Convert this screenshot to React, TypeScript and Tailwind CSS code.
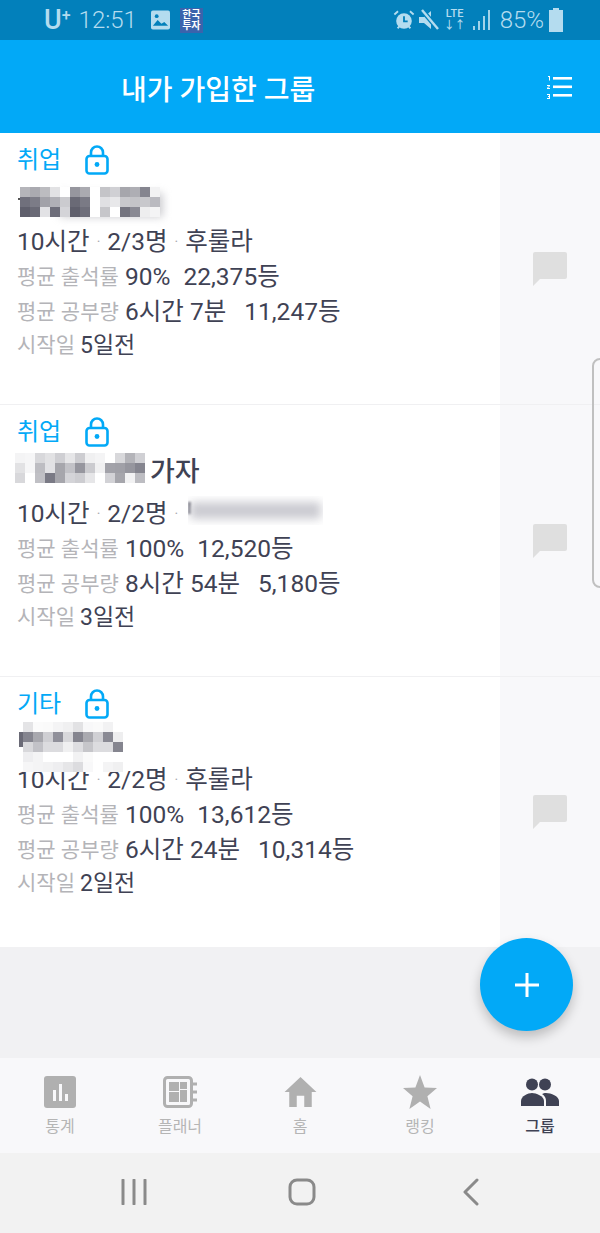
const font = '[font-family:Roboto,"Noto_Sans_CJK_KR",sans-serif]';

type Block = { left: number; top: number; rows: string[][] };

function Pixels({ left, top, rows }: Block) {
  return (
    <div className="absolute flex flex-col" style={{ left, top }}>
      {rows.map((row, i) => (
        <div key={i} className="flex h-[10px]">
          {row.map((c, j) => (
            <div key={j} className="w-[10px] h-[10px]" style={{ backgroundColor: c }} />
          ))}
        </div>
      ))}
    </div>
  );
}

function Lock() {
  return (
    <svg width="24" height="30" viewBox="0 0 24 30" fill="none" className="text-[#02a9f7]">
      <rect x="1.5" y="11" width="21" height="17.5" rx="3" stroke="currentColor" strokeWidth="2.6" />
      <path d="M6 11V7.5a6 6 0 0 1 12 0V11" stroke="currentColor" strokeWidth="2.6" />
      <circle cx="12" cy="19.5" r="2.4" fill="currentColor" />
    </svg>
  );
}

function Dot() {
  return <span className="mx-[7px] text-[#a9a9b0] text-[14px]">·</span>;
}

type Group = {
  cat: string;
  title?: string;
  count: string;
  owner?: string;
  attend: string;
  attendRank: string;
  study: string;
  studyRank: string;
  start: string;
};

function Card({ g, short, children }: { g: Group; short?: boolean; children?: React.ReactNode }) {
  return (
    <div className={short ? 'relative flex h-[270px] bg-white' : 'relative flex h-[271px] bg-white'}>
      <div className="flex-1 pl-[17px] pt-[9px] text-[#3f4254]">
        <div className="flex items-center h-[36px] text-[#02a9f7] text-[24px]">
          <span className="w-[68px]">{g.cat}</span>
          <Lock />
        </div>
        <div className={short ? 'h-[39px] flex items-center text-[27px] font-medium' : 'h-[45px] flex items-center text-[27px] font-medium'}>
          {g.title && <span className="ml-[133px]">{g.title}</span>}
        </div>
        <div className="h-[37px] pt-[2px] flex items-center text-[24.5px]">
          <span>10시간</span>
          <Dot />
          <span>{g.count}</span>
          <Dot />
          {g.owner && <span>{g.owner}</span>}
        </div>
        <div className="h-[35px] flex items-center text-[24.5px]">
          <span className="text-[#b4b4b8] text-[21px] w-[108px]">평균 출석률</span>
          <span>{g.attend}</span>
          <span className="ml-[13px]">{g.attendRank}</span>
        </div>
        <div className="h-[35px] flex items-center text-[24.5px]">
          <span className="text-[#b4b4b8] text-[21px] w-[108px]">평균 공부량</span>
          <span>{g.study}</span>
          <span className="ml-[18px]">{g.studyRank}</span>
        </div>
        <div className="h-[32px] flex items-center text-[23px]">
          <span className="text-[#b4b4b8] text-[21px] w-[63px]">시작일</span>
          <span>{g.start}</span>
        </div>
      </div>
      <div className="w-[100px] bg-[#f8f8fa] flex items-center justify-center">
        <svg width="34" height="34" viewBox="0 0 34 34" className="text-[#dfdfdf]">
          <path d="M2 0h30a2 2 0 0 1 2 2v23a2 2 0 0 1-2 2H7l-7 7V2a2 2 0 0 1 2-2z" fill="currentColor" />
        </svg>
      </div>
      {children}
    </div>
  );
}

function NavItem({ label, active, children }: { label: string; active?: boolean; children: React.ReactNode }) {
  return (
    <div className="flex-1 flex flex-col items-center pt-[17px]">
      <div className="h-[34px] flex items-center justify-center">{children}</div>
      <span className={active ? 'mt-[6px] text-[16px] leading-[24px] font-medium text-[#3f4254]' : 'mt-[6px] text-[16px] leading-[24px] text-[#b5b5b5]'}>
        {label}
      </span>
    </div>
  );
}

const W = '#ffffff';

const block1: string[][] = [
  ['#b5b5ba', '#aaaab0', '#bcbcc0', '#e2e2e4', W, '#96969e', '#aaaab0', W, '#c4c4c8', '#d0d0d4', '#a6a6ac', '#aeaeb4', '#85858f', '#f2f2f3'],
  ['#70707c', '#7c7c87', '#a2a2a9', '#b0b0b6', '#cbcbcf', '#6a6a76', '#7a7a85', W, '#e0e0e3', '#e8e8ea', '#c8c8cc', '#c4c4c8', '#c8c8cc', '#babac0'],
  ['#5f5f6c', '#6a6a76', '#e2e2e5', '#6e6e7a', '#d4d4d8', '#5f5f6c', '#6e6e7a', W, '#c6c6ca', W, '#74747f', '#8a8a94', '#eeeeef', '#f4f4f5'],
];

const block2: string[][] = [
  ['#f4f4f5', '#f6f6f7', '#d8d8db', '#e2e2e4', '#cfcfd3', '#e6e6e8', '#cdcdd1', '#f0f0f1', '#f4f4f5', W, '#d8d8db', '#b4b4b9', '#d0d0d4'],
  ['#e2e2e4', '#f6f6f7', '#bdbdc2', '#e2e2e5', '#a6a6ac', '#c2c2c7', '#96969e', '#cbcbcf', '#f0f0f1', '#a2a2a9', '#a0a0a7', '#96969e', '#85858f'],
  ['#d8d8db', W, '#c0c0c5', '#7a7a85', '#a6a6ac', '#d4d4d8', '#cdcdd1', '#e6e6e8', W, '#d2d2d6', '#a6a6ac', '#f2f2f3', '#bdbdc2'],
];

const block3: string[][] = [
  ['#e4e4e6', '#fbfbfb', '#fafafa', '#f4f4f5', '#f0f0f1', '#e2e2e4', '#f8f8f9', '#fafafa', '#f2f2f3', W],
  ['#85858f', '#a8a8ae', '#cfcfd3', '#90909a', '#d8d8db', '#85858f', '#aaaab0', '#d0d0d4', '#8a8a94', '#eeeeef'],
  ['#d8d8db', '#c2c2c7', '#dcdcdf', '#dcdcdf', '#f0f0f1', '#dedee1', '#c6c6ca', '#dcdcdf', '#dcdcdf', '#85858f'],
  ['#eeeef0', '#f4f4f5', W, W, W, '#f2f2f3', '#fafafa', W, W, W],
  ['#f6f6f7', '#f4f4f5', '#f2f2f3', '#eeeef0', '#e6e6e8', '#dcdcdf', '#f8f8f9', W, '#f4f4f5', '#f0f0f1'],
];

export default function App() {
  return (
    <div className={`relative w-[600px] h-[1233px] flex flex-col bg-[#f1f1f3] overflow-hidden ${font}`}>
      {/* status bar */}
      <div className="h-[40px] bg-[#0280bb] flex items-center justify-between pl-[44px] pr-[37px] text-[#b4dcef]">
        <div className="flex items-center">
          <span className="text-[27px] font-medium leading-none">U<sup className="text-[16px] -top-[8px]">+</sup></span>
          <span className="ml-[8px] text-[24px] font-light">12:51</span>
          <svg width="19" height="20" viewBox="0 0 20 20" className="ml-[14px]">
            <rect width="20" height="20" rx="2" fill="currentColor" />
            <path d="M2 16l5-6 4 4 3-2 4 4z" fill="#0280bb" />
            <circle cx="6" cy="6" r="2" fill="#0280bb" />
          </svg>
          <div className="ml-[10px] w-[23px] h-[25px] bg-[#3b63ac] text-white text-[10px] leading-[11px] font-bold flex flex-col items-center justify-center">
            <span>한국</span>
            <span>투자</span>
          </div>
        </div>
        <div className="flex items-center">
          <svg width="22" height="24" viewBox="0 0 24 24" fill="none">
            <circle cx="12" cy="13" r="8.5" fill="currentColor" />
            <path d="M12 8v5.5h4" stroke="#0280bb" strokeWidth="2" />
            <path d="M1.5 6l4-3.5M22.5 6l-4-3.5M5 21l2-2M19 21l-2-2" stroke="currentColor" strokeWidth="2" />
          </svg>
          <svg width="20" height="22" viewBox="0 0 20 22" className="ml-[4px]">
            <path d="M0 8h5l7-6v18l-7-6H0z" fill="currentColor" />
            <path d="M2 0l17 20" stroke="#0280bb" strokeWidth="5" />
            <path d="M3 1l16 19" stroke="currentColor" strokeWidth="2.4" />
          </svg>
          <div className="ml-[6px] w-[20px] flex flex-col items-center text-[11px] leading-[12px] font-medium">
            <span>LTE</span>
            <span>↓↑</span>
          </div>
          <svg width="18" height="22" viewBox="0 0 18 22" className="ml-[8px]">
            <path d="M1 17v4M6 12v9M11 7v14M16 1v20" stroke="currentColor" strokeWidth="1.8" />
          </svg>
          <span className="ml-[9px] text-[24px] font-light leading-none">85%</span>
          <svg width="14" height="24" viewBox="0 0 14 24" className="ml-[5px]">
            <path d="M4 0h6v2h4v22H0V2h4z" fill="currentColor" />
          </svg>
        </div>
      </div>

      {/* header */}
      <div className="h-[93px] bg-[#02a9f7] flex items-center justify-between pl-[121px] pr-[28px] text-white">
        <span className="mt-[8px] text-[28px] font-medium">내가 가입한 그룹</span>
        <svg width="25" height="24" viewBox="0 0 25 24" fill="white">
          <rect x="6" y="2" width="19" height="2.6" />
          <rect x="6" y="10.5" width="19" height="2.6" />
          <rect x="6" y="19" width="19" height="2.6" />
          <path d="M1 1h2v4.5H2V2H1zM0 10h3v1L1 13h2v1H0v-1l2-2H0zM0 19h3v5H0v-1h2v-1H1v-1h1v-1H0z" />
        </svg>
      </div>

      {/* groups */}
      <Card
        g={{ cat: '취업', count: '2/3명', owner: '후룰라', attend: '90%', attendRank: '22,375등', study: '6시간 7분', studyRank: '11,247등', start: '5일전' }}
      >
        <div className="absolute left-[60px] top-[60px] w-[103px] h-[24px] bg-[#9a9aa2]/50 blur-[4px]" />
        <div className="absolute left-[18px] top-[65px] w-[4px] h-[2px] bg-[#555]" />
        <Pixels left={20} top={54} rows={block1} />
      </Card>
      <div className="h-px bg-[#f0f0f2]" />
      <Card
        g={{ cat: '취업', title: '가자', count: '2/2명', attend: '100%', attendRank: '12,520등', study: '8시간 54분', studyRank: '5,180등', start: '3일전' }}
      >
        <Pixels left={15} top={48} rows={block2} />
        <div className="absolute left-[188px] top-[91px] w-[135px] h-[29px] bg-white overflow-hidden">
          <div className="absolute left-0 top-[6px] w-[3px] h-[12px] bg-[#6a6a76] blur-[1px]" />
          <div className="mt-[6px] ml-[2px] w-[131px] h-[17px] bg-[#cbcbd1] blur-[5px]" />
        </div>
      </Card>
      <div className="h-px bg-[#f0f0f2]" />
      <Card
        short
        g={{ cat: '기타', count: '2/2명', owner: '후룰라', attend: '100%', attendRank: '13,612등', study: '6시간 24분', studyRank: '10,314등', start: '2일전' }}
      >
        <div className="absolute left-[19px] top-[55px] w-[4px] h-[15px] bg-[#6a6a76]" />
        <Pixels left={23} top={45} rows={block3} />
      </Card>

      <div className="flex-1" />

      {/* bottom tabs */}
      <div className="h-[95px] bg-[#f8f8fa] flex">
        <NavItem label="통계">
          <svg width="32" height="32" viewBox="0 0 32 32">
            <rect width="32" height="32" rx="3" fill="#b0b0b0" />
            <path d="M9 14h3v11H9zM15 8h3v17h-3zM21 18h3v7h-3z" fill="#f8f8fa" />
          </svg>
        </NavItem>
        <NavItem label="플래너">
          <svg width="34" height="32" viewBox="0 0 34 32" fill="none">
            <rect x="1.5" y="1.5" width="27" height="29" rx="3" stroke="#b0b0b0" strokeWidth="3" />
            <path d="M6 6h10v9H6zM17 6h7v7h-7zM6 16h10v10H6zM17 14h7v12h-7z" fill="#b0b0b0" />
            <path d="M30 8h4M30 16h4M30 24h4" stroke="#b0b0b0" strokeWidth="3" />
          </svg>
        </NavItem>
        <NavItem label="홈">
          <svg width="33" height="30" viewBox="0 0 34 32">
            <path d="M17 0l17 16h-5v16h-8V20h-8v12H5V16H0z" fill="#b0b0b0" />
          </svg>
        </NavItem>
        <NavItem label="랭킹">
          <svg width="34" height="34" viewBox="0 0 34 34">
            <path d="M17 0l4.6 12.400L34 13l-9.600 8.200L27.600 34 17 26.600 6.400 34l3.200-12.800L0 13l12.400-.6z" fill="#b0b0b0" />
          </svg>
        </NavItem>
        <NavItem label="그룹" active>
          <svg width="38" height="28" viewBox="0 0 38 28" fill="#3f4254">
            <circle cx="11" cy="6.500" r="6" />
            <circle cx="24" cy="6.500" r="6" />
            <path d="M0 28v-5c0-5 7-8 11-8s12 3 12 8v5z" />
            <path d="M25 28v-5c0-3-1-5-4-7 1-.5 2.500-1 4-1 5 0 13 3 13 8v5z" />
          </svg>
        </NavItem>
      </div>

      {/* android nav */}
      <div className="h-[80px] bg-[#f2f2f2] flex items-center pb-[2px]">
        <div className="flex-1 flex justify-center">
          <svg width="26" height="26" viewBox="0 0 26 26" className="ml-[68px]">
            <path d="M2 1v24M13 1v24M24 1v24" stroke="#8a8a8a" strokeWidth="3" strokeLinecap="round" />
          </svg>
        </div>
        <div className="flex-1 flex justify-center">
          <svg width="28" height="28" viewBox="0 0 28 28" fill="none" className="ml-[4px]">
            <rect x="2" y="2" width="24" height="24" rx="7" stroke="#8a8a8a" strokeWidth="3" />
          </svg>
        </div>
        <div className="flex-1 flex justify-center">
          <svg width="16" height="28" viewBox="0 0 16 28" fill="none" className="mr-[58px]">
            <path d="M14 2L2 14l12 12" stroke="#8a8a8a" strokeWidth="3" strokeLinecap="round" strokeLinejoin="round" />
          </svg>
        </div>
      </div>

      {/* edge panel handle */}
      <div className="absolute left-[592px] top-[358px] w-[10px] h-[230px] rounded-l-[8px] border-2 border-[#c0c0c0]" />

      {/* fab */}
      <div className="absolute left-[480px] top-[938px] w-[93px] h-[93px] rounded-full bg-[#02a9f7] shadow-[0_6px_12px_rgba(0,0,0,0.22)] flex items-center justify-center">
        <svg width="24" height="24" viewBox="0 0 24 24">
          <path d="M12 0v24M0 12h24" stroke="white" strokeWidth="3" />
        </svg>
      </div>
    </div>
  );
}
